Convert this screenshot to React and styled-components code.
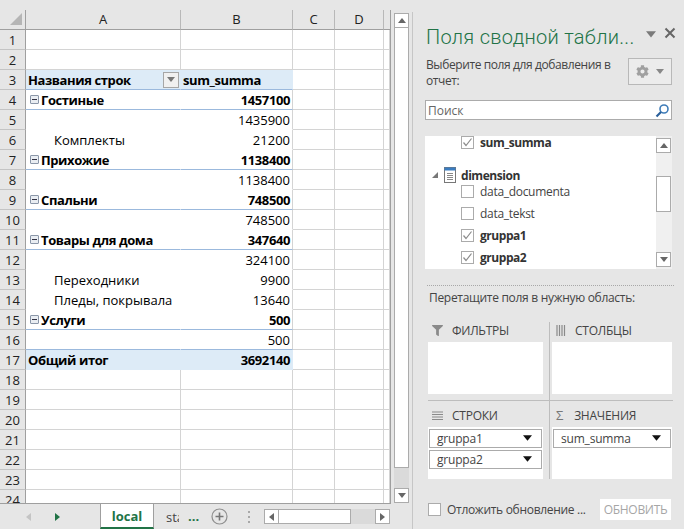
import React from 'react';
import styled, { createGlobalStyle } from 'styled-components';
import { FaCog, FaFilter } from 'react-icons/fa';

const Global = createGlobalStyle`
  html, body { margin: 0; padding: 0; background: #e6e6e6; }
  * { box-sizing: border-box; }
`;
const FONT = `"Open Sans", "Noto Sans", "Liberation Sans", sans-serif`;

const Page = styled.div`
  width: 684px; height: 529px; overflow: hidden; display: flex;
  background: #e6e6e6; font-family: ${FONT}; font-size: 13px; color: #000;
`;
const Left = styled.div`width: 412px; flex: none; padding-top: 10px; display: flex; flex-direction: column;`;
const Split = styled.div`width: 1px; flex: none; margin-top: 12px; background: #c6c6c6;`;
const SheetArea = styled.div`height: 493px; display: flex; flex: none;`;
const Sheet = styled.div`width: 391px; flex: none; overflow: hidden; border-right: 1px solid #9f9f9f;`;
const GridRow = styled.div`display: grid; grid-template-columns: 26px 155px 112px 42px 49px 6px; height: ${p => p.$h || 20}px;`;
const ColHead = styled.div`
  display: flex; align-items: center; justify-content: center; color: #222; font-size: 13px; padding-bottom: 1px;
  border-right: 1px solid #b8b8b8; border-bottom: 1px solid #9f9f9f; background: #e6e6e6;
  &:last-child { border-right: 0; }
`;
const Corner = styled(ColHead)`
  justify-content: flex-start; padding-left: 10px; border-right-color: #9f9f9f; border-bottom-color: #9f9f9f;
`;
const RowHead = styled.div`
  display: flex; align-items: center; justify-content: center; font-size: 13px; color: #222;
  background: #e6e6e6; border-right: 1px solid #9f9f9f; border-bottom: 1px solid #c4c4c4; padding-top: 1px;
`;
const Cell = styled.div`
  display: flex; align-items: center; white-space: nowrap; height: 20px; overflow: hidden;
  font-weight: ${p => p.$bold ? 700 : 400};
  letter-spacing: ${p => p.$bold ? '-0.4px' : '0'};
  justify-content: ${p => p.$right ? 'flex-end' : 'flex-start'};
  padding: ${p => p.$right ? '0 2px 0 0' : `0 0 0 ${p.$indent || 2}px`};
  background: ${p => p.$fill ? '#ddebf7' : '#fff'};
  border-bottom: 1px solid ${p => p.$line === 'blue' ? '#9bb9dd' : p.$line === 'none' ? (p.$fill ? '#ddebf7' : '#fff') : '#d4d4d4'};
  border-right: 1px solid ${p => p.$noRight ? (p.$fill ? '#ddebf7' : '#fff') : '#d4d4d4'};
`;
const Toggle = styled.span`
  width: 9px; height: 9px; flex: none; margin-right: 2px; border: 1px solid #8a96a8; border-radius: 1px;
  background: #e9edf2; display: flex; align-items: center; justify-content: center;
  &::after { content: ''; width: 5px; height: 1px; background: #334; }
`;
const FilterBtn = styled.span`
  width: 16px; height: 16px; margin-left: auto; margin-right: 1px; border: 1px solid #a6a6a6; background: #f0f0f0;
  display: flex; align-items: center; justify-content: center;
`;
const VBar = styled.div`
  width: 15px; flex: none; margin-left: 3px; margin-top: 3px; display: flex; flex-direction: column; background: #dadada;
`;
const SBtn = styled.div`
  width: ${p => p.$w || 15}px; height: ${p => p.$h || 15}px; flex: none; background: #fff; border: 1px solid #ababab;
  display: flex; align-items: center; justify-content: center;
`;
const VThumb = styled.div`height: 440px; flex: none; background: #fff; border: 1px solid #ababab; border-top: 0;`;
const Spacer = styled.div`flex: 1;`;

const TabBar = styled.div`
  height: 26px; width: 391px; flex: none; display: flex; align-items: center; border-top: 1px solid #9f9f9f; position: relative;
`;
const Nav = styled.div`width: ${p => p.$w}px; flex: none; display: flex; justify-content: flex-end;`;
const Tab = styled.div`
  width: 54px; height: 26px; margin-top: -1px; margin-left: 0; flex: none; border: 1px solid #9f9f9f; border-bottom: 2px solid #217346;
  background: #fff; color: #217346; font-weight: 700; display: flex; align-items: center; justify-content: center; padding-top: 1px;
`;
const TabClip = styled.div`width: 13px; margin-left: 12px; overflow: hidden; color: #444; flex: none;`;
const More = styled.div`color: #217346; font-weight: 700; margin-left: 9px; width: 23px; line-height: 1; flex: none;`;
const Dots = styled.div`width: 2px; height: 12px; margin-left: 20px; flex: none; background: repeating-linear-gradient(#a8a8a8 0 2px, transparent 2px 5px);`;
const HBar = styled.div`display: flex; width: 126px; height: 15px; margin-left: 14px; flex: none; background: #dadada;`;
const HThumb = styled.div`width: 72px; background: #fff; border: 1px solid #ababab; border-left: 0;`;

const Panel = styled.div`flex: 1; padding-left: 13px; position: relative; color: #444;`;
const TitleRow = styled.div`height: 55px; padding-top: 22px; display: flex; align-items: flex-start;`;
const Title = styled.div`font-family: Roboto, ${FONT}; font-size: 20px; line-height: 30px; font-weight: 300; color: #217346; white-space: nowrap; width: 220px; letter-spacing: 0.3px;`;
const TitleArrow = styled.span`display: inline-flex; flex: none; margin-top: 8px;`;
const TitleClose = styled.span`display: inline-flex; flex: none; margin-left: 8px; margin-top: 5px;`;
const DescRow = styled.div`display: flex; height: 45px; justify-content: space-between; padding-right: 12px;`;
const Desc = styled.div`width: 195px; font-size: 12px; line-height: 16px; padding-top: 2px; color: #444; letter-spacing: -0.4px;`;
const Gear = styled.div`
  width: 44px; height: 27px; margin-top: 3px; border: 1px solid #b8b8b8; background: #ececec; display: flex; align-items: center; justify-content: center; gap: 7px;
`;
const Search = styled.div`
  width: 247px; height: 20px; margin-left: -1px; border: 1px solid #ababab; background: #fff; display: flex; align-items: center;
  justify-content: space-between; padding: 0 1px 0 2px; color: #666; font-size: 12px;
`;
const FieldBox = styled.div`
  width: 247px; height: 133px; margin-left: -1px; margin-top: 16px; background: #fff; display: flex; overflow: hidden;
`;
const Fields = styled.div`flex: 1; margin-top: -5px;`;
const FieldRow = styled.div`
  height: 22px; display: flex; align-items: center; padding-left: 36px; gap: 6px; font-size: 12px; white-space: nowrap;
  font-weight: ${p => p.$bold ? 700 : 400}; color: ${p => p.$bold ? '#333' : '#444'}; letter-spacing: ${p => p.$bold ? '-0.45px' : '-0.3px'};
`;
const Group = styled(FieldRow)`height: 18px; margin-top: 13px; margin-bottom: -4px; padding-left: 6px; font-weight: 700; gap: 0; color: #333; letter-spacing: -0.45px;`;
const Check = styled.span`
  width: 13px; height: 13px; flex: none; border: 1px solid #ababab; background: #fff; display: flex; align-items: center; justify-content: center;
`;
const FieldBar = styled.div`
  width: 16px; flex: none; background: #f0f0f0; padding: 2px 1px 2px 0; display: flex; flex-direction: column;
`;
const FieldThumb = styled.div`width: 15px; height: 36px; flex: none; margin-top: 23px; background: #fff; border: 1px solid #ababab;`;
const Dotted = styled.div`width: 247px; margin-top: 16px; margin-left: 1px; border-top: 1px dotted #a8a8a8;`;
const DragLabel = styled.div`margin-top: 3px; margin-left: 3px; height: 20px; line-height: 18px; font-size: 12px; letter-spacing: -0.3px;`;
const Area = styled.div`padding: ${p => p.$right ? '0 0 0 3px' : '0 6px 0 0'};`;
const AreaHead = styled.div`
  height: 20px; display: flex; align-items: center; gap: ${p => p.$gap || 9}px; font-size: 12px; color: #444; padding: 0 0 4px 4px;
  text-transform: uppercase; letter-spacing: -0.25px;
`;
const AreaBox = styled.div`height: 52px; background: #fff; padding: 2px 1px; display: flex; flex-direction: column; gap: 2px;`;
const AreasGrid = styled.div`
  margin-left: 2px; margin-top: 13px; width: 245px; display: grid; grid-template-columns: 121px 123px; position: relative;
  &::before { content: ''; position: absolute; left: 121px; top: 0; bottom: 0; width: 1px; background: #bdbdbd; }
  &::after { content: ''; position: absolute; left: 0; right: 0; top: 78px; height: 1px; background: #bdbdbd; }
`;
const Chip = styled.div`
  height: 19px; border: 1px solid #ababab; background: #fff; display: flex; align-items: center; justify-content: space-between;
  padding: 0 9px 0 7px; font-size: 12px; color: #444; letter-spacing: -0.2px;
`;
const RowPad = styled.div`height: 13px;`;
const Sigma = styled.span`color: #777; font-size: 13px;`;
const Footer = styled.div`margin-left: 2px; margin-top: 20px; width: 243px; height: 21px; display: flex; align-items: center; gap: 6px; font-size: 12px; white-space: nowrap; letter-spacing: -0.3px;`;
const UpdateBtn = styled.div`
  margin-left: auto; width: 71px; height: 21px; background: #fff; color: #a6a6a6; display: flex; align-items: center; justify-content: center; font-size: 12px;
`;

const Tri = ({ dir = 'down', size = 8, color = '#666' }) => {
  const pts = { down: '0,1 8,1 4,6', up: '0,6 8,6 4,1', left: '6,0 6,8 1,4', right: '1,0 1,8 6,4', corner: '7,1 7,7 1,7' }[dir];
  return <svg width={size} height={size} viewBox="0 0 8 8" style={{ flex: 'none' }}><polygon points={pts} fill={color} /></svg>;
};
const Tick = () => (
  <svg width="11" height="11" viewBox="0 0 11 11"><path d="M1.5 5.5 L4 8.5 L9.5 1.5" fill="none" stroke="#8c8c8c" strokeWidth="1.2" /></svg>
);

const rows = [
  { a: 'Названия строк', b: 'sum_summa', head: true },
  { a: 'Гостиные', b: '1457100', g: true },
  { b: '1435900' },
  { a: 'Комплекты', b: '21200', sub: true },
  { a: 'Прихожие', b: '1138400', g: true },
  { b: '1138400' },
  { a: 'Спальни', b: '748500', g: true },
  { b: '748500' },
  { a: 'Товары для дома', b: '347640', g: true },
  { b: '324100' },
  { a: 'Переходники', b: '9900', sub: true },
  { a: 'Пледы, покрывала', b: '13640', sub: true },
  { a: 'Услуги', b: '500', g: true },
  { b: '500', last: true },
  { a: 'Общий итог', b: '3692140', total: true },
];

function PivotRow({ n, r }) {
  const fill = r.head || r.total;
  const bold = r.head || r.g || r.total;
  const line = r.head || r.g || r.last ? 'blue' : 'none';
  const l = r.total ? 'none' : line;
  return (
    <GridRow>
      <RowHead>{n}</RowHead>
      <Cell $fill={fill} $bold={bold} $line={l} $noRight $indent={r.sub ? 28 : r.g ? 4 : 2}>
        {r.g && <Toggle />}
        {r.a}
        {r.head && <FilterBtn><Tri size={8} color="#777" /></FilterBtn>}
      </Cell>
      <Cell $fill={fill} $bold={bold} $line={l} $noRight={fill || false} $right={!r.head}>{r.b}</Cell>
      <Cell /><Cell /><Cell />
    </GridRow>
  );
}
const BlankRow = ({ n, h }) => (
  <GridRow $h={h}>
    <RowHead>{n}</RowHead><Cell /><Cell /><Cell /><Cell /><Cell />
  </GridRow>
);

export default function App() {
  return (
    <Page>
      <Global />
      <Left>
        <SheetArea>
          <Sheet>
            <GridRow>
              <Corner>
                <svg width="12" height="12" viewBox="0 0 12 12"><polygon points="12,0 12,12 0,12" fill="#b5b5b5" /></svg>
              </Corner>
              <ColHead>A</ColHead><ColHead>B</ColHead><ColHead>C</ColHead><ColHead>D</ColHead><ColHead />
            </GridRow>
            <BlankRow n={1} /><BlankRow n={2} />
            {rows.map((r, i) => <PivotRow key={i} n={i + 3} r={r} />)}
            {[18, 19, 20, 21, 22, 23, 24].map(n => <BlankRow key={n} n={n} />)}
          </Sheet>
          <VBar>
            <SBtn><Tri dir="up" /></SBtn>
            <VThumb />
            <Spacer />
            <SBtn><Tri dir="down" /></SBtn>
          </VBar>
        </SheetArea>
        <TabBar>
          <Nav $w={33}><Tri dir="left" color="#c4c4c4" /></Nav>
          <Nav $w={29}><Tri dir="right" color="#217346" /></Nav>
          <Nav $w={38} />
          <Tab>local</Tab>
          <TabClip>sta</TabClip>
          <More>...</More>
          <svg width="17" height="17" viewBox="0 0 17 17" style={{ flex: 'none' }}>
            <circle cx="8.5" cy="8.5" r="7.5" fill="none" stroke="#8f8f8f" strokeWidth="1.2" />
            <path d="M8.5 4.5v8M4.5 8.5h8" stroke="#777" strokeWidth="1.6" />
          </svg>
          <Dots />
          <HBar>
            <SBtn><Tri dir="left" /></SBtn>
            <HThumb />
            <Spacer />
            <SBtn><Tri dir="right" /></SBtn>
          </HBar>
        </TabBar>
      </Left>
      <Split />
      <Panel>
        <TitleRow>
          <Title>Поля сводной табли...</Title>
          <TitleArrow><Tri size={10} color="#7a7a7a" /></TitleArrow>
          <TitleClose>
            <svg width="12" height="12" viewBox="0 0 12 12"><path d="M1.5 1.5l9 9M10.5 1.5l-9 9" stroke="#666" strokeWidth="2" /></svg>
          </TitleClose>
        </TitleRow>
        <DescRow>
          <Desc>Выберите поля для добавления в отчет:</Desc>
          <Gear><FaCog size={13} color="#a0a0a0" /><Tri size={8} color="#888" /></Gear>
        </DescRow>
        <Search>
          Поиск
          <svg width="15" height="15" viewBox="0 0 15 15" style={{ transform: 'scaleX(-1)' }}>
            <circle cx="6" cy="6" r="4" fill="none" stroke="#3f7cb8" strokeWidth="1.6" />
            <path d="M9 9l4.5 4.5" stroke="#2a5f9a" strokeWidth="2.2" />
          </svg>
        </Search>
        <FieldBox>
          <Fields>
            <FieldRow $bold><Check><Tick /></Check>sum_summa</FieldRow>
            <Group>
              <Tri dir="corner" size={8} color="#777" />
              <svg width="12" height="16" viewBox="0 0 12 16" style={{ marginLeft: 5, marginRight: 5, flex: 'none' }}>
                <rect x="0.5" y="0.5" width="11" height="15" fill="#fff" stroke="#777" />
                <rect x="0.5" y="0.5" width="11" height="3" fill="#3a7cc0" />
                <path d="M3 6.5h6M3 8.5h6M3 10.5h6M3 12.5h6" stroke="#888" />
              </svg>
              dimension
            </Group>
            <FieldRow><Check />data_documenta</FieldRow>
            <FieldRow><Check />data_tekst</FieldRow>
            <FieldRow $bold><Check><Tick /></Check>gruppa1</FieldRow>
            <FieldRow $bold><Check><Tick /></Check>gruppa2</FieldRow>
          </Fields>
          <FieldBar>
            <SBtn><Tri dir="up" /></SBtn>
            <FieldThumb />
            <Spacer />
            <SBtn><Tri dir="down" /></SBtn>
          </FieldBar>
        </FieldBox>
        <Dotted />
        <DragLabel>Перетащите поля в нужную область:</DragLabel>
        <AreasGrid>
          <Area>
            <AreaHead><FaFilter size={11} color="#8a8a8a" />Фильтры</AreaHead>
            <AreaBox />
            <RowPad />
          </Area>
          <Area $right>
            <AreaHead>
              <svg width="10" height="11" viewBox="0 0 10 11"><path d="M1 0v11M3.5 0v11M6 0v11M8.5 0v11" stroke="#8a8a8a" strokeWidth="1.2" /></svg>
              Столбцы
            </AreaHead>
            <AreaBox />
            <RowPad />
          </Area>
          <Area>
            <AreaHead>
              <svg width="11" height="9" viewBox="0 0 11 9"><path d="M0 1h11M0 3.5h11M0 6h11M0 8.5h11" stroke="#8a8a8a" strokeWidth="1" /></svg>
              Строки
            </AreaHead>
            <AreaBox>
              <Chip>gruppa1<Tri size={9} color="#111" /></Chip>
              <Chip>gruppa2<Tri size={9} color="#111" /></Chip>
            </AreaBox>
          </Area>
          <Area $right>
            <AreaHead $gap={11}><Sigma>Σ</Sigma>Значения</AreaHead>
            <AreaBox><Chip>sum_summa<Tri size={9} color="#111" /></Chip></AreaBox>
          </Area>
        </AreasGrid>
        <Footer>
          <Check />
          Отложить обновление ...
          <UpdateBtn>ОБНОВИТЬ</UpdateBtn>
        </Footer>
      </Panel>
    </Page>
  );
}
